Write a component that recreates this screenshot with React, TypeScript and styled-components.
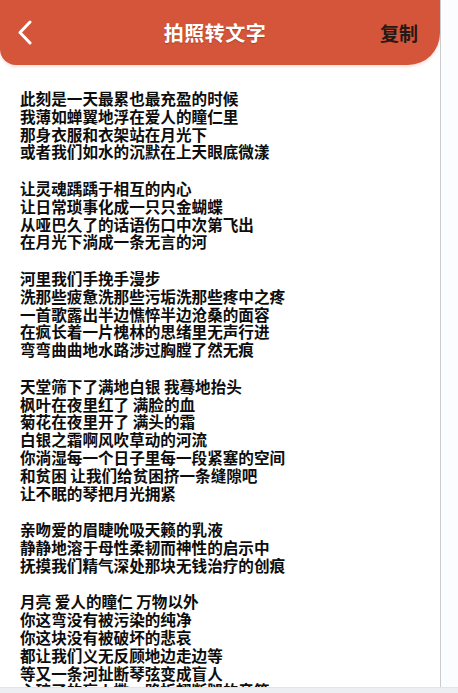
import React from "react";
import styled, { createGlobalStyle } from "styled-components";

const Global = createGlobalStyle`
  html, body { margin: 0; padding: 0; background: #ffffff; }
  body { font-family: "Noto Sans CJK SC", "Noto Sans", sans-serif; }
`;

const Page = styled.div`
  width: 458px;
  height: 693px;
  display: flex;
  flex-direction: column;
  overflow: hidden;
  background: #fdfdfe;
`;

const Main = styled.div`
  flex: 1;
  display: flex;
  min-height: 0;
`;

const Panel = styled.div`
  width: 440px;
  border-right: 1px solid #c9cbcf;
  background: #ffffff;
  display: flex;
  flex-direction: column;
  overflow: hidden;
`;

const Side = styled.div`
  flex: 1;
  background: #fbfcfd;
`;

const BottomStrip = styled.div`
  height: 5px;
  background: #eceef1;
  border-top: 1px solid #e2e4e8;
`;

const Header = styled.header`
  height: 65px;
  flex-shrink: 0;
  background: #d4553a;
  border-radius: 0 0 32px 16px;
  box-shadow: 0 2px 3px rgba(212, 85, 58, 0.18);
  display: grid;
  grid-template-columns: 60px 1fr 60px;
  align-items: center;
  padding: 0 22px 0 17px;
`;

const BackButton = styled.div`
  display: flex;
  align-items: center;
  height: 100%;
  padding-top: 1px;
`;

const Title = styled.h1`
  margin: 0;
  text-align: center;
  color: #ffffff;
  font-size: 20px;
  font-weight: 700;
  letter-spacing: 0.5px;
  padding-right: 5px;
  text-shadow: 0 1px 1px rgba(90, 30, 15, 0.35);
`;

const Action = styled.div`
  text-align: right;
  color: #261813;
  font-size: 19px;
  font-weight: 700;
`;

const Content = styled.div`
  padding: 25px 0 0 20px;
  color: #0d0d0d;
  font-size: 15.6px;
  font-weight: 700;
  line-height: 17.8px;
`;

const Stanza = styled.div<{ $first?: boolean }>`
  margin-top: ${(p) => (p.$first ? "0" : "18.8px")};
`;

const Line = styled.div`
  white-space: nowrap;
`;

const poem: string[][] = [
  [
    "此刻是一天最累也最充盈的时候",
    "我薄如蝉翼地浮在爱人的瞳仁里",
    "那身衣服和衣架站在月光下",
    "或者我们如水的沉默在上天眼底微漾",
  ],
  [
    "让灵魂踽踽于相互的内心",
    "让日常琐事化成一只只金蝴蝶",
    "从哑巴久了的话语伤口中次第飞出",
    "在月光下淌成一条无言的河",
  ],
  [
    "河里我们手挽手漫步",
    "洗那些疲惫洗那些污垢洗那些疼中之疼",
    "一首歌露出半边憔悴半边沧桑的面容",
    "在疯长着一片槐林的思绪里无声行进",
    "弯弯曲曲地水路涉过胸膛了然无痕",
  ],
  [
    "天堂筛下了满地白银 我蓦地抬头",
    "枫叶在夜里红了 满脸的血",
    "菊花在夜里开了 满头的霜",
    "白银之霜啊风吹草动的河流",
    "你淌湿每一个日子里每一段紧塞的空间",
    "和贫困 让我们给贫困挤一条缝隙吧",
    "让不眠的琴把月光拥紧",
  ],
  [
    "亲吻爱的眉睫吮吸天籁的乳液",
    "静静地溶于母性柔韧而神性的启示中",
    "抚摸我们精气深处那块无钱治疗的创痕",
  ],
  [
    "月亮 爱人的瞳仁 万物以外",
    "你这弯没有被污染的纯净",
    "你这块没有被破坏的悲哀",
    "都让我们义无反顾地边走边等",
    "等又一条河扯断琴弦变成盲人",
    "心碎了的盲人撒一路折翅断腿的音符",
  ],
];

export default function App() {
  return (
    <>
      <Global />
      <Page>
        <Main>
          <Panel>
            <Header>
              <BackButton>
                <svg width="16" height="26" viewBox="0 0 16 26" fill="none">
                  <path
                    d="M13 2 L3 12.5 L13 23"
                    stroke="#ffffff"
                    strokeWidth="3"
                    strokeLinecap="round"
                    strokeLinejoin="round"
                  />
                </svg>
              </BackButton>
              <Title>拍照转文字</Title>
              <Action>复制</Action>
            </Header>
            <Content>
              {poem.map((stanza, i) => (
                <Stanza key={i} $first={i === 0}>
                  {stanza.map((l, j) => (
                    <Line key={j}>{l}</Line>
                  ))}
                </Stanza>
              ))}
            </Content>
          </Panel>
          <Side />
        </Main>
        <BottomStrip />
      </Page>
    </>
  );
}
